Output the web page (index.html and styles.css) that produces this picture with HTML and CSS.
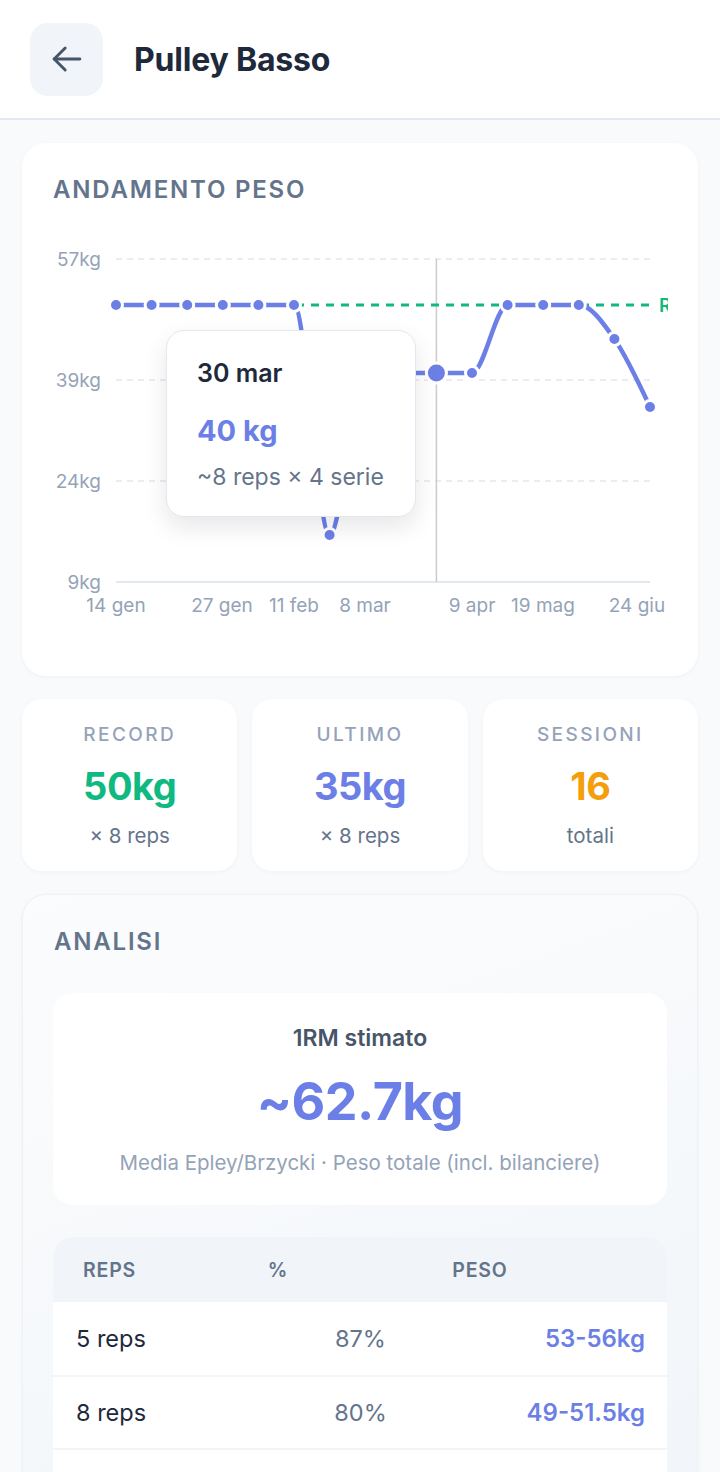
FILE: index.html
```html
<!DOCTYPE html>
<html lang="it">
<head>
    <meta charset="UTF-8">
    <meta name="viewport" content="width=device-width, initial-scale=1.0">
    <title>Pulley Basso</title>
    <link rel="stylesheet" href="styles.css">
</head>
<body>
    <header class="topbar">
        <button class="back-btn" aria-label="Indietro">
            <svg width="44" height="44" viewBox="0 0 24 24" fill="none" stroke="#475569" stroke-width="1.6" stroke-linecap="round" stroke-linejoin="round">
                <path d="M19 12H5"/>
                <path d="M11 18l-6-6 6-6"/>
            </svg>
        </button>
        <h1 class="page-title">Pulley Basso</h1>
    </header>

    <main class="content">
        <section class="card chart-card">
            <h2 class="section-title">Andamento peso</h2>
            <svg class="chart" width="676" height="405" viewBox="22 235 676 405">
                <defs>
                    <clipPath id="plot-clip"><rect x="22" y="235" width="646" height="405"/></clipPath>
                </defs>
                <g class="grid" stroke="#e2e8f0" stroke-width="1.5" stroke-dasharray="6 5">
                    <line x1="116" y1="259" x2="650" y2="259"/>
                    <line x1="116" y1="380" x2="650" y2="380"/>
                    <line x1="116" y1="481" x2="650" y2="481"/>
                </g>
                <line x1="116" y1="582" x2="650" y2="582" stroke="#e2e8f0" stroke-width="2"/>
                <g class="y-labels" fill="#94a3b8" font-size="19" text-anchor="end">
                    <text x="101" y="266">57kg</text>
                    <text x="101" y="387">39kg</text>
                    <text x="101" y="488">24kg</text>
                    <text x="101" y="589">9kg</text>
                </g>
                <g class="x-labels" fill="#94a3b8" font-size="19" text-anchor="middle">
                    <text x="116" y="612">14 gen</text>
                    <text x="222" y="612">27 gen</text>
                    <text x="294" y="612">11 feb</text>
                    <text x="365" y="612">8 mar</text>
                    <text x="472" y="612">9 apr</text>
                    <text x="543" y="612">19 mag</text>
                    <text x="637" y="612">24 giu</text>
                </g>
                <line x1="436.4" y1="259" x2="436.4" y2="582" stroke="#cbcbcb" stroke-width="1.5"/>
                <g clip-path="url(#plot-clip)">
                    <line x1="116" y1="305" x2="650" y2="305" stroke="#10b981" stroke-width="3" stroke-dasharray="8 7"/>
                    <text x="659" y="312" fill="#10b981" font-size="19" font-weight="600">Record</text>
                </g>
                <path d="M116,305 H294 C305.87,305 317.73,535 329.6,535 C341.47,535 353.33,373 365.2,373 H472 C483.87,373 495.73,305 507.6,305 H578.8 C590.67,305 602.53,322 614.4,339 C626.27,356 638.13,381.5 650,407" fill="none" stroke="#6b7fe6" stroke-width="4.5" stroke-linejoin="round"/>
                <g class="dots" fill="#6b7fe6" stroke="#fff" stroke-width="3">
                    <circle cx="116" cy="305" r="6.5"/>
                    <circle cx="151.6" cy="305" r="6.5"/>
                    <circle cx="187.2" cy="305" r="6.5"/>
                    <circle cx="222.8" cy="305" r="6.5"/>
                    <circle cx="258.4" cy="305" r="6.5"/>
                    <circle cx="294" cy="305" r="6.5"/>
                    <circle cx="329.6" cy="535" r="6.5"/>
                    <circle cx="365.2" cy="373" r="6.5"/>
                    <circle cx="400.8" cy="373" r="6.5"/>
                    <circle cx="472" cy="373" r="6.5"/>
                    <circle cx="507.6" cy="305" r="6.5"/>
                    <circle cx="543.2" cy="305" r="6.5"/>
                    <circle cx="578.8" cy="305" r="6.5"/>
                    <circle cx="614.4" cy="339" r="6.5"/>
                    <circle cx="650" cy="407" r="6.5"/>
                    <circle cx="436.4" cy="373" r="10"/>
                </g>
            </svg>
            <div class="tooltip">
                <div class="tooltip-date">30 mar</div>
                <div class="tooltip-value">40 kg</div>
                <div class="tooltip-meta">~8 reps × 4 serie</div>
            </div>
        </section>

        <section class="stats">
            <div class="card stat">
                <div class="stat-label">Record</div>
                <div class="stat-value green">50kg</div>
                <div class="stat-sub">× 8 reps</div>
            </div>
            <div class="card stat">
                <div class="stat-label">Ultimo</div>
                <div class="stat-value indigo">35kg</div>
                <div class="stat-sub">× 8 reps</div>
            </div>
            <div class="card stat">
                <div class="stat-label">Sessioni</div>
                <div class="stat-value orange">16</div>
                <div class="stat-sub">totali</div>
            </div>
        </section>

        <section class="card analysis-card">
            <h2 class="section-title">Analisi</h2>
            <div class="orm-box">
                <div class="orm-label">1RM stimato</div>
                <div class="orm-value">~62.7kg</div>
                <div class="orm-note">Media Epley/Brzycki · Peso totale (incl. bilanciere)</div>
            </div>
            <div class="rep-table">
                <div class="rep-head">
                    <span>Reps</span>
                    <span>%</span>
                    <span>Peso</span>
                </div>
                <div class="rep-row">
                    <span class="row-reps">5 reps</span>
                    <span class="row-pct">87%</span>
                    <span class="row-peso">53-56kg</span>
                </div>
                <div class="rep-row">
                    <span class="row-reps">8 reps</span>
                    <span class="row-pct">80%</span>
                    <span class="row-peso">49-51.5kg</span>
                </div>
                <div class="rep-row">
                    <span class="row-reps">10 reps</span>
                    <span class="row-pct">75%</span>
                    <span class="row-peso">46-48kg</span>
                </div>
            </div>
        </section>
    </main>
</body>
</html>
```

FILE: styles.css
```css
* {
    box-sizing: border-box;
}
body {
    margin: 0;
    font-family: 'Inter', 'Noto Sans', sans-serif;
    background: #f8fafc;
    color: #1e293b;
}
.topbar {
    height: 120px;
    background: #fff;
    border-bottom: 2px solid #e2e8f0;
    display: flex;
    align-items: center;
    padding: 0 30px;
    gap: 31px;
}
.back-btn {
    width: 73px;
    height: 73px;
    border: none;
    border-radius: 18px;
    background: #f1f5f9;
    display: flex;
    align-items: center;
    justify-content: center;
    padding: 0;
}
.page-title {
    margin: 0;
    font-size: 32px;
    font-weight: 700;
    color: #1e293b;
    letter-spacing: -0.2px;
}
.content {
    padding: 23px 22px 40px;
    display: flex;
    flex-direction: column;
    gap: 23px;
}
.card {
    background: #fff;
    border-radius: 24px;
    box-shadow: 0 1px 4px rgba(15, 23, 42, 0.04);
}
.section-title {
    margin: 0 31px;
    font-size: 24px;
    line-height: 30px;
    font-weight: 600;
    letter-spacing: 1.8px;
    text-transform: uppercase;
    color: #64748b;
}
.chart-card {
    position: relative;
    padding: 32px 0 36px;
}
.chart-card .section-title {
    margin-bottom: 30px;
}
.chart {
    display: block;
    font-family: 'Inter', 'Noto Sans', sans-serif;
}
.tooltip {
    position: absolute;
    left: 144px;
    top: 187px;
    width: 250px;
    height: 187px;
    background: #fff;
    border: 1.5px solid #e2e8f0;
    border-radius: 18px;
    box-shadow: 0 10px 24px rgba(15, 23, 42, 0.10);
    padding: 28px 16px 28px 30px;
    white-space: nowrap;
}
.tooltip-date {
    font-size: 25px;
    line-height: 28px;
    font-weight: 600;
    color: #1e293b;
}
.tooltip-value {
    margin-top: 28px;
    font-size: 29px;
    line-height: 32px;
    font-weight: 700;
    color: #6b7fe6;
}
.tooltip-meta {
    margin-top: 17px;
    font-size: 23px;
    line-height: 26px;
    color: #64748b;
}
.stats {
    display: grid;
    grid-template-columns: repeat(3, 1fr);
    gap: 15px;
}
.stat {
    border-radius: 20px;
    text-align: center;
    padding: 24px 10px 23px;
}
.stat-label {
    font-size: 19px;
    line-height: 24px;
    font-weight: 500;
    letter-spacing: 2.4px;
    text-transform: uppercase;
    color: #94a3b8;
}
.stat-value {
    margin-top: 18px;
    font-size: 38px;
    line-height: 42px;
    font-weight: 700;
    letter-spacing: -0.5px;
}
.stat-sub {
    margin-top: 17px;
    font-size: 20.5px;
    line-height: 24px;
    color: #64748b;
}
.green { color: #10b981; }
.indigo { color: #6b7fe6; }
.orange { color: #f59e0b; }

.analysis-card {
    padding: 32px 30px 30px;
    background: linear-gradient(160deg, #fbfcfd, #f1f5f9);
    border: 1px solid #eef2f6;
}
.analysis-card .section-title {
    margin: 0 1px 36px;
}
.orm-box {
    background: #fff;
    border-radius: 20px;
    text-align: center;
    padding: 32px 20px 30px;
}
.orm-label {
    font-size: 23px;
    line-height: 26px;
    font-weight: 600;
    color: #475569;
}
.orm-value {
    margin-top: 23px;
    font-size: 52px;
    line-height: 56px;
    font-weight: 700;
    letter-spacing: -0.5px;
    color: #6b7fe6;
}
.orm-note {
    margin-top: 21px;
    font-size: 20.5px;
    line-height: 24px;
    color: #94a3b8;
}
.rep-table {
    margin-top: 32px;
    border-radius: 20px 20px 0 0;
    overflow: hidden;
    background: #fff;
}
.rep-head {
    height: 65px;
    background: #f1f5f9;
    display: grid;
    grid-template-columns: repeat(3, 1fr);
    align-items: center;
    padding: 0 30px;
    font-size: 19.5px;
    font-weight: 600;
    letter-spacing: 0.8px;
    text-transform: uppercase;
    color: #64748b;
}
.rep-row {
    height: 73px;
    display: grid;
    grid-template-columns: repeat(3, 1fr);
    align-items: center;
    padding: 0 22px 0 23px;
    border-top: 2px solid #f1f5f9;
    font-size: 23.5px;
}
.rep-head + .rep-row {
    border-top: none;
}
.row-reps {
    color: #1e293b;
}
.row-pct {
    text-align: center;
    color: #64748b;
}
.row-peso {
    text-align: right;
    font-size: 24px;
    font-weight: 600;
    color: #6b7fe6;
}
```
